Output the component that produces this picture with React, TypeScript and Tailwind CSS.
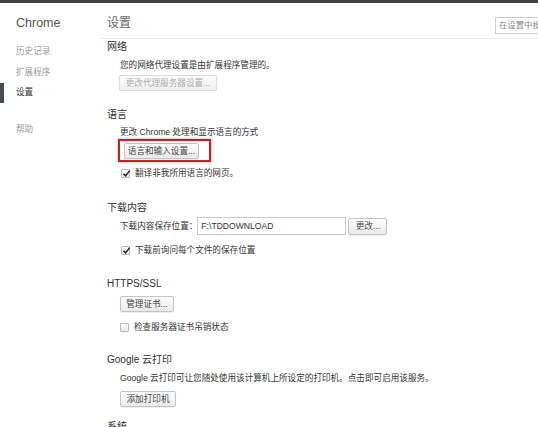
import type { ReactNode } from "react";

const FONT = { fontFamily: '"Liberation Sans", "Noto Sans CJK SC", sans-serif' };

function Btn({ children, w, disabled }: { children: ReactNode; w: string; disabled?: boolean }) {
  return (
    <div
      className={`${w} h-[16px] flex items-center justify-center rounded-[2px] border text-[8.6px] leading-none whitespace-nowrap ${
        disabled
          ? "border-[#dcdcdc] bg-gradient-to-b from-[#fbfbfb] to-[#f1f1f1] text-[#ababab]"
          : "border-[#c4c4c4] bg-gradient-to-b from-[#fefefe] to-[#e9e9e9] text-[#444] shadow-[0_1px_0_rgba(0,0,0,0.06)]"
      }`}
    >
      {children}
    </div>
  );
}

function Check({ checked, label }: { checked?: boolean; label: string }) {
  return (
    <div className="flex h-[12px] items-center gap-[5px] pl-[1px]">
      <div className="relative h-[9px] w-[9px] rounded-[1px] border border-[#b9b9b9] bg-gradient-to-b from-[#fdfdfd] to-[#e8e8e8]">
        {checked && (
          <svg viewBox="0 0 10 10" className="absolute left-[0px] top-[-1px] h-[9px] w-[9px]">
            <path d="M1.6 5.2 L4 7.6 L8.6 1.8" fill="none" stroke="#2a2a2a" strokeWidth="1.7" />
          </svg>
        )}
      </div>
      <span className="text-[8.6px] text-[#333] whitespace-nowrap">{label}</span>
    </div>
  );
}

function Heading({ children, mt }: { children: ReactNode; mt: string }) {
  return <div className={`${mt} flex h-[14px] items-center pl-[7px] text-[10px] text-[#303030]`}>{children}</div>;
}

function Text({ children, mt }: { children: ReactNode; mt: string }) {
  return <div className={`${mt} flex h-[12px] items-center text-[8.6px] text-[#333] whitespace-nowrap`}>{children}</div>;
}

export default function App() {
  return (
    <div className="h-[427px] w-[538px] overflow-hidden bg-white" style={FONT}>
      <div className="h-[3px] bg-[#3f3f3f]" />
      <div className="flex">
        <aside className="w-[100px] shrink-0 pt-[13px]">
          <div className="h-[15px] pl-[16px] text-[12.5px] leading-[15px] text-[#555]">Chrome</div>
          <div className="mt-[10.5px]">
            <div className="flex h-[20.5px] items-center pl-[16px] text-[8.6px] text-[#999]">历史记录</div>
            <div className="flex h-[20.5px] items-center pl-[16px] text-[8.6px] text-[#999]">扩展程序</div>
            <div className="flex h-[20px] items-center border-l-4 border-[#464c54] pl-[12px] text-[8.6px] text-[#333]">
              设置
            </div>
            <div className="mt-[17px] flex h-[20px] items-center pl-[16px] text-[8.6px] text-[#999]">帮助</div>
          </div>
        </aside>

        <main className="min-w-0 flex-1">
          <div className="flex h-[36px] items-start justify-between border-b border-[#ebebeb]">
            <div className="mt-[13px] pl-[7px] text-[12px] leading-[15px] text-[#666]">设置</div>
            <div className="mt-[14px] flex h-[17px] w-[70px] shrink-0 translate-x-[27px] items-center border border-[#cfcfcf] pl-[3px] text-[8.4px] whitespace-nowrap text-[#888]">
              在设置中搜索
            </div>
          </div>

          <Heading mt="mt-0">网络</Heading>
          <div className="pl-[20px]">
            <Text mt="mt-[6px]">您的网络代理设置是由扩展程序管理的。</Text>
            <div className="mt-[4px] -ml-[1px]">
              <Btn w="w-[98px]" disabled>
                更改代理服务器设置...
              </Btn>
            </div>
          </div>

          <Heading mt="mt-[16px]">语言</Heading>
          <div className="pl-[20px]">
            <Text mt="mt-[5px]">更改 Chrome 处理和显示语言的方式</Text>
            <div className="-ml-[2px] mt-[1px] h-[23px] w-[93px] border-2 border-[#c81e28] pl-[4px] pt-[2px] shadow-[0_0_3px_rgba(0,0,0,0.35)]">
              <Btn w="w-[75px]">语言和输入设置...</Btn>
            </div>
            <div className="mt-[5px]">
              <Check checked label="翻译非我所用语言的网页。" />
            </div>
          </div>

          <Heading mt="mt-[21px]">下载内容</Heading>
          <div className="pl-[20px]">
            <div className="mt-[3px] flex h-[18px] items-center">
              <span className="shrink-0 whitespace-nowrap text-[8.6px] text-[#333]">下载内容保存位置：</span>
              <div className="flex h-[18px] w-[149px] shrink-0 items-center border border-[#cacaca] pl-[3px] text-[8.6px] text-[#333]">
                F:\TDDOWNLOAD
              </div>
              <div className="ml-[2px]">
                <Btn w="w-[39px] h-[17px]">更改...</Btn>
              </div>
            </div>
            <div className="mt-[9px]">
              <Check checked label="下载前询问每个文件的保存位置" />
            </div>
          </div>

          <Heading mt="mt-[20px]">HTTPS/SSL</Heading>
          <div className="pl-[20px]">
            <div className="mt-[6px]">
              <Btn w="w-[54px]">管理证书...</Btn>
            </div>
            <div className="mt-[9px] -ml-[1px]">
              <Check label="检查服务器证书吊销状态" />
            </div>
          </div>

          <Heading mt="mt-[19px]">Google 云打印</Heading>
          <div className="pl-[20px]">
            <Text mt="mt-[6px]">Google 云打印可让您随处使用该计算机上所设定的打印机。点击即可启用该服务。</Text>
            <div className="mt-[7px]">
              <Btn w="w-[56px]">添加打印机</Btn>
            </div>
          </div>

          <Heading mt="mt-[12px]">系统</Heading>
        </main>
      </div>
    </div>
  );
}
